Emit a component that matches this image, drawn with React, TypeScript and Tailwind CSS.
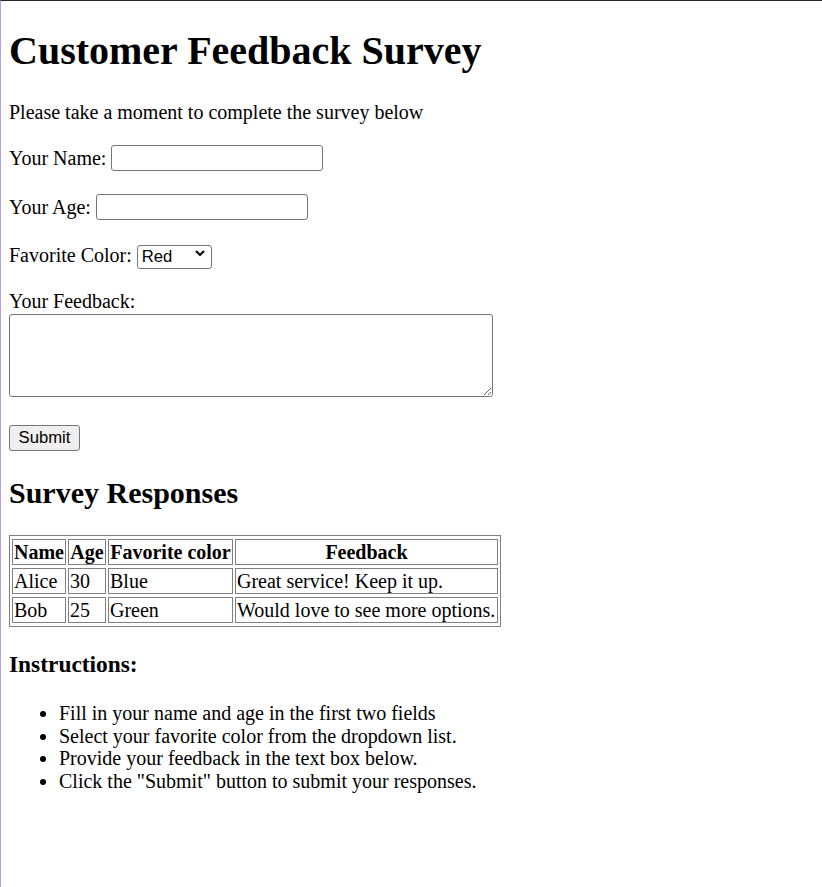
import { useState } from "react";

const responses = [
  { name: "Alice", age: 30, color: "Blue", feedback: "Great service! Keep it up." },
  { name: "Bob", age: 25, color: "Green", feedback: "Would love to see more options." },
];

const instructions = [
  "Fill in your name and age in the first two fields",
  "Select your favorite color from the dropdown list.",
  "Provide your feedback in the text box below.",
  'Click the "Submit" button to submit your responses.',
];

const inputCls =
  "h-[26px] w-[212px] rounded-[3px] border border-[#767676] bg-white px-[3px] text-[16.67px] outline-none";

export default function App() {
  const [color, setColor] = useState("Red");

  return (
    <div
      className="min-h-screen w-full border-l border-t border-l-[#b79cf0] border-t-[#262636] bg-white pl-[8px] text-[20px] text-black"
      style={{ fontFamily: '"Liberation Serif", "Times New Roman", serif' }}
    >
      <h1 className="mt-[27px] text-[40px] font-bold leading-[46px]">Customer Feedback Survey</h1>

      <p className="mt-[27px] leading-[23px]">Please take a moment to complete the survey below</p>

      {/* Form */}
      <form className="mt-[20px] flex flex-col items-start" onSubmit={(e) => e.preventDefault()}>
        <div className="mb-[22px] flex h-[27px] items-center gap-[5px]">
          <label htmlFor="name">Your Name:</label>
          <input id="name" type="text" className={inputCls} />
        </div>

        <div className="mb-[21px] flex h-[27px] items-center gap-[5px]">
          <label htmlFor="age">Your Age:</label>
          <input id="age" type="text" className={inputCls} />
        </div>

        <div className="mb-[22px] flex h-[27px] items-center gap-[5px]">
          <label htmlFor="color">Favorite Color:</label>
          <div className="relative">
            <select
              id="color"
              value={color}
              onChange={(e) => setColor(e.target.value)}
              className="h-[24px] w-[75px] appearance-none rounded-[3px] border border-[#767676] bg-white pl-[4px] text-[16.67px] leading-[20px] outline-none"
              style={{ fontFamily: '"Liberation Sans", Arial, sans-serif' }}
            >
              <option>Red</option>
              <option>Blue</option>
              <option>Green</option>
            </select>
            <svg
              className="pointer-events-none absolute right-[7px] top-[10px] h-[6px] w-[10px]"
              viewBox="0 0 10 6"
              fill="none"
              stroke="black"
              strokeWidth={2}
            >
              <polyline points="1,1 5,5 9,1" />
            </svg>
          </div>
        </div>

        <label htmlFor="feedback" className="leading-[23px]">
          Your Feedback:
        </label>
        <textarea
          id="feedback"
          className="mt-[1px] h-[83px] w-[484px] rounded-[3px] border border-[#767676] bg-white p-[3px] text-[16.67px] outline-none"
        />

        <button
          type="submit"
          className="mt-[28px] h-[26px] w-[71px] rounded-[3px] border border-[#767676] bg-[#efefef] text-[16.67px] leading-[20px]"
          style={{ fontFamily: '"Liberation Sans", Arial, sans-serif' }}
        >
          Submit
        </button>
      </form>

      <h2 className="mt-[24px] text-[30px] font-bold leading-[35px]">Survey Responses</h2>

      {/* Responses table */}
      <table className="mt-[25px] w-[492px] table-fixed border-separate border-spacing-x-[2px] border-spacing-y-[3px] border border-[#808080] leading-[22px]">
        <thead>
          <tr>
            <th className="h-[26px] w-[54px] border border-[#808080] p-[1px] text-center font-bold">Name</th>
            <th className="h-[26px] w-[38px] border border-[#808080] p-[1px] text-center font-bold">Age</th>
            <th className="h-[26px] w-[125px] border border-[#808080] p-[1px] text-center font-bold">Favorite color</th>
            <th className="h-[26px] border border-[#808080] p-[1px] text-center font-bold">Feedback</th>
          </tr>
        </thead>
        <tbody>
          {responses.map((r) => (
            <tr key={r.name}>
              <td className="h-[26px] border border-[#808080] p-[1px]">{r.name}</td>
              <td className="h-[26px] border border-[#808080] p-[1px]">{r.age}</td>
              <td className="h-[26px] border border-[#808080] p-[1px]">{r.color}</td>
              <td className="h-[26px] whitespace-nowrap border border-[#808080] p-[1px]">{r.feedback}</td>
            </tr>
          ))}
        </tbody>
      </table>

      <h3 className="mt-[24px] text-[23.4px] font-bold leading-[27px]">Instructions:</h3>

      <ul className="mt-[24px] list-disc pl-[50px]">
        {instructions.map((t) => (
          <li key={t} className="leading-[22.7px]">
            {t}
          </li>
        ))}
      </ul>
    </div>
  );
}
